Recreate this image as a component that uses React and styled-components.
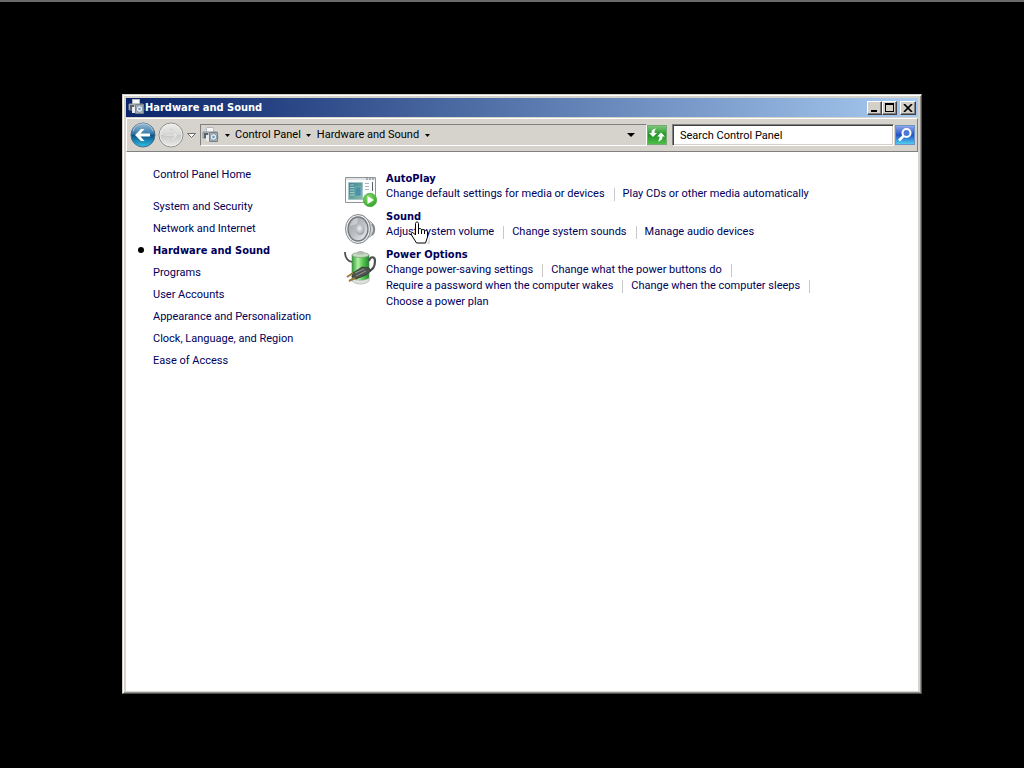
import React from 'react'
import styled, { createGlobalStyle } from 'styled-components'

const GlobalStyle = createGlobalStyle`
    * {
        box-sizing: border-box;
    }
    body {
        margin: 0;
        background-color: #000;
        font-family: Roboto, "DejaVu Sans Condensed", sans-serif;
        font-size: 11px;
        color: #000;
    }
    button, input {
        font: inherit;
        color: inherit;
    }
    svg {
        display: block;
        flex: none;
    }
`
const boldFont = '"DejaVu Sans Condensed", "DejaVu Sans", sans-serif'

const Desktop = styled.div`
    min-height: 100vh;
    display: flex;
    border-top: 2px solid #6a6a6a;
    padding: 92px 102px 74px 122px;
`
const Window = styled.main`
    flex: 1;
    min-width: 0;
    display: flex;
    flex-direction: column;
    padding: 2px;
    background-color: #d6d3cc;
    border: 1px solid;
    border-color: #d4d0c8 #505050 #505050 #d4d0c8;
    box-shadow: inset 1px 1px #fff, inset -1px -1px #909090;
`
const TitleBar = styled.header`
    height: 19px;
    margin: 1px;
    display: flex;
    align-items: center;
    padding: 0 2px;
    color: #fff;
    background: linear-gradient(to right, #0a246a, #a6caf0);
`
const Title = styled.h1`
    flex: 1;
    margin: 0;
    font-family: ${boldFont};
    font-size: 11px;
    line-height: 16px;
`
const CaptionButton = styled.button`
    width: ${props => props.$wide ? "16px" : "15px"};
    height: 14px;
    padding: 0;
    margin-left: ${props => props.$wide ? "3px" : "0"};
    display: flex;
    align-items: center;
    justify-content: center;
    background-color: #d4d0c8;
    border: 1px solid;
    border-color: #fff #404040 #404040 #fff;
    box-shadow: inset -1px -1px #808080;
`
const Toolbar = styled.nav`
    height: 34px;
    display: flex;
    align-items: center;
    padding: 0 2px 0 3px;
    margin: 0 1px;
    background-color: #d6d3cc;
    border: 1px solid;
    border-color: #fff #808080 #808080 #fff;
`
const PlainButton = styled.button`
    padding: 0;
    border: 0;
    background: none;
    display: flex;
    align-items: center;
    justify-content: center;
`
const HistoryButtons = styled.div`
    display: flex;
    align-items: center;
    gap: 2px;
`
const AddressBar = styled.div`
    flex: 1;
    height: 22px;
    min-width: 0;
    display: flex;
    align-items: center;
    margin-left: 3px;
    padding-left: 1px;
    border: 1px solid;
    border-color: #808080 #fff #fff #808080;
`
const Crumb = styled.a`
    color: #000;
    text-decoration: none;
    white-space: nowrap;
    line-height: 18px;
`
const Arrow = styled(PlainButton)`
    width: ${props => props.$last ? "30px" : "16px"};
    height: 18px;
`
const Spacer = styled.div`
    flex: 1;
`
const SquareButton = styled(PlainButton)`
    width: 20px;
    height: 20px;
    border: 1px solid ${props => props.$edge};
    background: ${props => props.$fill};
`
const SearchBox = styled.input`
    width: 222px;
    height: 22px;
    margin: 0 1px 0 5px;
    padding: 0 7px;
    background-color: #fff;
    border: 1px solid;
    border-color: #808080 #fff #fff #808080;
    border-radius: 0;
    box-shadow: inset 1px 1px #404040, inset -1px -1px #d4d0c8;
    outline: none;
    &::placeholder {
        color: #000;
        opacity: 1;
    }
`
const Content = styled.div`
    flex: 1;
    display: flex;
    margin: 0 1px;
    padding-bottom: 16px;
    background-color: #fff;
`
const Sidebar = styled.nav`
    width: 218px;
    flex: none;
    padding: 11px 0 0 12px;
`
const SideLink = styled.a`
    display: flex;
    align-items: center;
    height: 22px;
    margin-bottom: ${props => props.$home ? "10px" : "0"};
    color: #00005a;
    text-decoration: none;
    white-space: nowrap;
    font-family: ${props => props.$active ? boldFont : "inherit"};
    font-weight: ${props => props.$active ? "bold" : "normal"};
    &::before {
        content: "";
        width: 6px;
        height: 6px;
        margin-right: 9px;
        border-radius: 50%;
        background-color: ${props => props.$active ? "#000" : "transparent"};
    }
`
const Categories = styled.div`
    flex: 1;
    min-width: 0;
    display: flex;
    flex-direction: column;
    gap: 8px;
    padding-top: 20px;
`
const Category = styled.section`
    position: relative;
    display: flex;
    gap: 8px;
    min-height: 30px;
`
const IconBox = styled.div`
    width: 34px;
    height: 30px;
    flex: none;
    padding-top: 3px;
`
const CategoryTitle = styled.h2`
    margin: 0;
    font-family: ${boldFont};
    font-size: 11px;
    line-height: 14px;
`
const NavyLink = styled.a`
    color: #00005a;
    text-decoration: none;
    white-space: nowrap;
`
const TaskRow = styled.div`
    display: flex;
    height: 16px;
    line-height: 16px;
`
const Task = styled.span`
    display: flex;
    align-items: center;
    &::after {
        content: "";
        display: ${props => props.$divider ? "block" : "none"};
        width: 1px;
        height: 13px;
        margin: 0 8px 0 9px;
        background-color: #c8c8c8;
    }
`
const Cursor = styled.div`
    position: absolute;
    left: 66px;
    top: 11px;
    pointer-events: none;
`

const sideItems = [
    'System and Security',
    'Network and Internet',
    'Hardware and Sound',
    'Programs',
    'User Accounts',
    'Appearance and Personalization',
    'Clock, Language, and Region',
    'Ease of Access',
]

const PrinterIcon = () => (
    <svg width="17" height="17" viewBox="0 0 17 17" aria-hidden="true">
        <path d="M4.500 .5h7v6h-7z" fill="#f4f6f8" stroke="#b4bac0" />
        <path d="M1 5h14l1 6H1z" fill="#c2c6ca" stroke="#8a9098" />
        <path d="M2 6h4v5H2z" fill="#59616a" />
        <path d="M4 8h3v6H4z" fill="#e8ecef" />
        <path d="M7.500 5.500h8v9h-8z" fill="#a9b1b9" stroke="#78818a" />
        <circle cx="11.500" cy="10" r="3.300" fill="#e4edf3" stroke="#8694a0" />
        <circle cx="11.500" cy="10" r="1.300" fill="#6e9db8" />
    </svg>
)

const BackIcon = () => (
    <svg width="26" height="26" viewBox="0 0 26 26" aria-hidden="true">
        <defs>
            <linearGradient id="back" x1="0" y1="0" x2="0" y2="1">
                <stop offset="0" stopColor="#9cbdd4" />
                <stop offset=".42" stopColor="#3a80b0" />
                <stop offset=".52" stopColor="#0d5488" />
                <stop offset="1" stopColor="#2fc3ea" />
            </linearGradient>
        </defs>
        <circle cx="13" cy="13" r="12" fill="url(#back)" stroke="#4b6a82" />
        <path d="M3 9a10.500 10.500 0 0 1 20 0" fill="none" stroke="#d0e2ee" opacity=".7" />
        <path d="M5 13l6-6h3.500l-4 4.500H20v3h-9.500l4 4.500H11z" fill="#fff" />
    </svg>
)

const ForwardIcon = () => (
    <svg width="26" height="26" viewBox="0 0 26 26" aria-hidden="true">
        <defs>
            <linearGradient id="forward" x1="0" y1="0" x2="0" y2="1">
                <stop offset="0" stopColor="#ececea" />
                <stop offset=".48" stopColor="#d9d9d7" />
                <stop offset=".52" stopColor="#cbcbc9" />
                <stop offset="1" stopColor="#ececea" />
            </linearGradient>
        </defs>
        <circle cx="13" cy="13" r="12" fill="url(#forward)" stroke="#8c8c8c" />
        <circle cx="13" cy="13" r="11" fill="none" stroke="#f2f2f0" opacity=".7" />
        <path d="M20 13l-6-6h-2l4 5H6v2h10l-4 5h2z" fill="#e4e4e2" stroke="#c0c0be" strokeWidth=".5" />
    </svg>
)

const DownArrow = ({ size = 5 }) => (
    <svg width={size} height={size === 5 ? 3 : 4} viewBox="0 0 8 5" preserveAspectRatio="none" aria-hidden="true">
        <path d="M0 0h8L4 5z" fill="#000" />
    </svg>
)

const AutoPlayIcon = () => (
    <svg width="34" height="34" viewBox="0 0 34 34" aria-hidden="true">
        <defs>
            <linearGradient id="panel" x1="0" y1="0" x2="1" y2="1">
                <stop offset="0" stopColor="#3b7f96" />
                <stop offset="1" stopColor="#84c0a0" />
            </linearGradient>
            <radialGradient id="play" cx=".4" cy=".3" r=".8">
                <stop offset="0" stopColor="#86dd66" />
                <stop offset="1" stopColor="#279c26" />
            </radialGradient>
        </defs>
        <path d="M1.500 2.500h30v25h-30z" fill="#fcfcfc" stroke="#8f9498" />
        <path d="M2 3h29v2H2z" fill="#e0e3e6" />
        <path d="M22 4h2M25 4h2M28 4h2" stroke="#6e747a" />
        <path d="M4.500 7.500h14v17h-14z" fill="url(#panel)" stroke="#a9c4c8" />
        <path d="M6 10h4M6 12.500h4M6 15h4M6 17.500h4M6 20h4" stroke="#b5d8dc" strokeWidth=".8" />
        <path d="M11 12h6v9h-6z" fill="#4a90a8" stroke="#8dc1be" strokeWidth=".5" />
        <path d="M21 8.500h4M21 11.500h4M21 14.500h4" stroke="#a8b4be" />
        <path d="M28.500 7v9" stroke="#596067" />
        <circle cx="26" cy="25" r="6.700" fill="url(#play)" stroke="#5fb552" />
        <path d="M23.500 21l6.500 4-6.500 4z" fill="#fff" />
    </svg>
)

const SpeakerIcon = () => (
    <svg width="34" height="33" viewBox="0 0 34 33" aria-hidden="true">
        <defs>
            <linearGradient id="cone" x1="0" y1="0" x2="1" y2="1">
                <stop offset="0" stopColor="#9498a0" />
                <stop offset=".5" stopColor="#bcc0c4" />
                <stop offset="1" stopColor="#f0f1f2" />
            </linearGradient>
            <radialGradient id="dome" cx=".45" cy=".4" r=".6">
                <stop offset="0" stopColor="#f0f1f2" />
                <stop offset="1" stopColor="#9ca1a5" />
            </radialGradient>
        </defs>
        <path d="M17 2c5 1 6 5 10 7 4 3 4 11 0 14-4 2-5 6-11 7z" fill="#d0d3d5" stroke="#9a9ea1" />
        <path d="M28 11c3 3 3 8 0 11" fill="none" stroke="#84888b" strokeWidth="2" />
        <ellipse cx="14" cy="16" rx="12.500" ry="14.500" fill="#eceeef" stroke="#85898c" />
        <ellipse cx="14" cy="16" rx="10" ry="12" fill="url(#cone)" stroke="#74787b" strokeWidth="1.300" />
        <ellipse cx="16" cy="16.500" rx="4.500" ry="5.500" fill="url(#dome)" />
        <path d="M6 13c1-5 4-8 8-8l-1 6z" fill="#fff" opacity=".35" />
    </svg>
)

const BatteryIcon = () => (
    <svg width="34" height="34" viewBox="0 0 34 34" aria-hidden="true">
        <defs>
            <linearGradient id="cell" x1="0" y1="0" x2="1" y2="0">
                <stop offset="0" stopColor="#2f9a35" />
                <stop offset=".35" stopColor="#b4f0a4" />
                <stop offset=".6" stopColor="#5fd058" />
                <stop offset="1" stopColor="#1f8a2a" />
            </linearGradient>
        </defs>
        <path d="M8 4h17v24c-3 4-14 4-17 0z" fill="url(#cell)" stroke="#5d8a5c" strokeWidth=".6" />
        <ellipse cx="16.500" cy="4" rx="8.500" ry="2.500" fill="#c8dcc4" stroke="#7d987a" strokeWidth=".7" />
        <path d="M13 1.500c0-2 7-2 7 0v2h-7z" fill="#b4bab2" />
        <path d="M8 27c4 3 13 3 17 0v3c-4 4-13 4-17 0z" fill="#dfe3de" stroke="#a0a69f" strokeWidth=".6" />
        <path d="M1 1c0 6 3 9 7 10" fill="none" stroke="#4d514f" strokeWidth="1.800" />
        <path d="M25 10c1-5 6-5 6 0 0 5-1 9-7 10" fill="none" stroke="#4b504e" strokeWidth="2.200" />
        <path d="M9 22l9-6 7 1 2 3-5 4-10 4-4-2z" fill="#4e5350" stroke="#2b2f2d" strokeWidth=".7" />
        <path d="M11 22l9-4M12 25l10-5" stroke="#949b97" />
        <path d="M9 22l-6 4M11 27l-6 3" stroke="#9b7a36" strokeWidth="2" />
    </svg>
)

const HandCursor = () => (
    <svg width="20" height="24" viewBox="0 0 20 24" aria-hidden="true">
        <path d="M7 23h10l3-9v9z" fill="#000" opacity=".12" />
        <path d="M5.500 14V2.500c0-2 3-2 3 0V9c0-2 3-2 3 0v1c0-2 3-2 3 0v1c0-2 3-2 3 0v5l-2 6h-9l-5-8c-1-2 1-3 2-2z" fill="#fff" stroke="#000" />
        <path d="M8.500 8v5M11.500 9v4M14.500 10v3" stroke="#000" />
    </svg>
)

const categories = [
    {
        title: 'AutoPlay',
        icon: <AutoPlayIcon />,
        rows: [['Change default settings for media or devices', 'Play CDs or other media automatically']],
    },
    {
        title: 'Sound',
        icon: <SpeakerIcon />,
        hovered: true,
        rows: [['Adjust system volume', 'Change system sounds', 'Manage audio devices']],
    },
    {
        title: 'Power Options',
        icon: <BatteryIcon />,
        rows: [
            ['Change power-saving settings', 'Change what the power buttons do'],
            ['Require a password when the computer wakes', 'Change when the computer sleeps'],
            ['Choose a power plan'],
        ],
    },
]

const App = () => {
  return (
    <Desktop>
        <GlobalStyle />
        <Window>
            <TitleBar>
                <PrinterIcon />
                <Title>Hardware and Sound</Title>
                <CaptionButton aria-label="Minimize">
                    <svg width="10" height="9" viewBox="0 0 10 9"><path d="M1 7h6v2H1z" /></svg>
                </CaptionButton>
                <CaptionButton aria-label="Maximize">
                    <svg width="9" height="9" viewBox="0 0 9 9"><path d="M0 0h9v9H0zM1 2v6h7V2z" fillRule="evenodd" /></svg>
                </CaptionButton>
                <CaptionButton $wide aria-label="Close">
                    <svg width="10" height="8" viewBox="0 0 10 8"><path d="M1 0l8 8M9 0L1 8" stroke="#000" strokeWidth="1.700" /></svg>
                </CaptionButton>
            </TitleBar>
            <Toolbar aria-label="Navigation">
                <HistoryButtons>
                    <PlainButton aria-label="Back"><BackIcon /></PlainButton>
                    <PlainButton aria-label="Forward"><ForwardIcon /></PlainButton>
                    <PlainButton aria-label="Recent pages">
                        <svg width="11" height="7" viewBox="0 0 11 7"><path d="M1.500 1.500h8l-4 4z" fill="#fff" stroke="#6b6b6b" /></svg>
                    </PlainButton>
                </HistoryButtons>
                <AddressBar>
                    <PrinterIcon />
                    <Arrow aria-label="Root"><DownArrow /></Arrow>
                    <Crumb href="#home">Control Panel</Crumb>
                    <Arrow aria-label="Control Panel items"><DownArrow /></Arrow>
                    <Crumb href="#hardware">Hardware and Sound</Crumb>
                    <Arrow aria-label="Hardware and Sound items"><DownArrow /></Arrow>
                    <Spacer />
                    <Arrow $last aria-label="Previous locations"><DownArrow size={8} /></Arrow>
                </AddressBar>
                <SquareButton $edge="#78a878" $fill="linear-gradient(#7cc878, #1d9425 50%, #4fc048)" aria-label="Refresh">
                    <svg width="18" height="18" viewBox="0 0 18 18">
                        <path d="M8 2.500C4.500 3 3.500 4.500 3.500 7H1l4 4 4-4H6.500c0-2 .5-3 1.500-4.500zM10 15.500c3.500-.5 4.500-2.500 4.500-5H17l-4-4-4 4h2.500c0 2-.5 3.500-1.500 5z" fill="#fff" />
                    </svg>
                </SquareButton>
                <SearchBox type="text" aria-label="Search Control Panel" placeholder="Search Control Panel" />
                <SquareButton $edge="#6c96c8" $fill="linear-gradient(#8fa6e8, #2450c4 50%, #4fd0f0)" aria-label="Search">
                    <svg width="18" height="18" viewBox="0 0 18 18">
                        <circle cx="10.500" cy="7" r="4" fill="#4e78d8" stroke="#fff" strokeWidth="2" />
                        <path d="M7.500 10L3 14.500" stroke="#fff" strokeWidth="2.500" />
                    </svg>
                </SquareButton>
            </Toolbar>
            <Content>
                <Sidebar aria-label="Control Panel">
                    <SideLink $home href="#home">Control Panel Home</SideLink>
                    {sideItems.map(item=>(
                        <SideLink key={item} href="#category" $active={item === 'Hardware and Sound'}>{item}</SideLink>
                    ))}
                </Sidebar>
                <Categories>
                    {categories.map(category=>(
                        <Category key={category.title}>
                            <IconBox>{category.icon}</IconBox>
                            <div>
                                <CategoryTitle><NavyLink href="#category">{category.title}</NavyLink></CategoryTitle>
                                {category.rows.map((row, r)=>(
                                    <TaskRow key={row[0]}>
                                        {row.map((task, i)=>(
                                            <Task key={task} $divider={i < row.length - 1 || r < category.rows.length - 1}>
                                                <NavyLink href="#task">{task}</NavyLink>
                                            </Task>
                                        ))}
                                    </TaskRow>
                                ))}
                            </div>
                            {category.hovered && <Cursor><HandCursor /></Cursor>}
                        </Category>
                    ))}
                </Categories>
            </Content>
        </Window>
    </Desktop>
  )
}

export default App
